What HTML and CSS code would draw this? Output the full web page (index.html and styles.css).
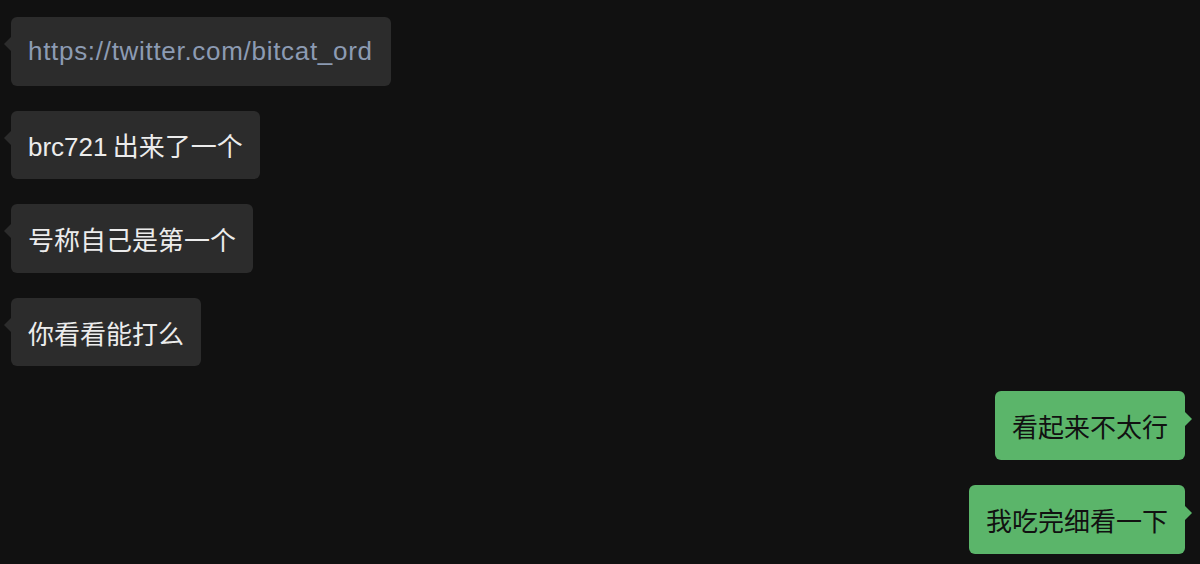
FILE: index.html
```html
<!DOCTYPE html>
<html lang="zh-CN">
<head>
  <meta charset="UTF-8">
  <meta name="viewport" content="width=device-width, initial-scale=1.0">
  <title>Chat</title>
  <link rel="stylesheet" href="styles.css">
</head>
<body>
  <div class="chat">
    <div class="row left">
      <div class="bubble link">https://twitter.com/bitcat_ord</div>
    </div>
    <div class="row left">
      <div class="bubble">brc721&thinsp;出来了一个</div>
    </div>
    <div class="row left">
      <div class="bubble">号称自己是第一个</div>
    </div>
    <div class="row left">
      <div class="bubble">你看看能打么</div>
    </div>
    <div class="row right">
      <div class="bubble">看起来不太行</div>
    </div>
    <div class="row right">
      <div class="bubble">我吃完细看一下</div>
    </div>
  </div>
</body>
</html>
```

FILE: styles.css
```css
body {
  margin: 0;
  background: #111111;
  font-family: "Liberation Sans", "Noto Sans CJK SC", sans-serif;
  height: 100vh;
  overflow: hidden;
}

.chat {
  display: flex;
  flex-direction: column;
  gap: 25px;
  padding: 17px 15px 0 11px;
}

.row {
  display: flex;
}

.row.right {
  justify-content: flex-end;
}

.bubble {
  position: relative;
  height: 68.6px;
  box-sizing: border-box;
  padding: 0 17px;
  display: flex;
  align-items: center;
  font-size: 26px;
  border-radius: 6px;
}

.left .bubble {
  background: #2c2c2c;
  color: #ececec;
}

.left .bubble::before {
  content: "";
  position: absolute;
  left: -7px;
  top: 20px;
  border-top: 7px solid transparent;
  border-bottom: 7px solid transparent;
  border-right: 7px solid #2c2c2c;
}

.bubble.link {
  color: #8c9bb3;
  letter-spacing: 0.7px;
  padding-right: 18px;
}

.right .bubble {
  background: #5bb56a;
  color: #111111;
}

.right .bubble::after {
  content: "";
  position: absolute;
  right: -7px;
  top: 21px;
  border-top: 7px solid transparent;
  border-bottom: 7px solid transparent;
  border-left: 7px solid #5bb56a;
}
```
